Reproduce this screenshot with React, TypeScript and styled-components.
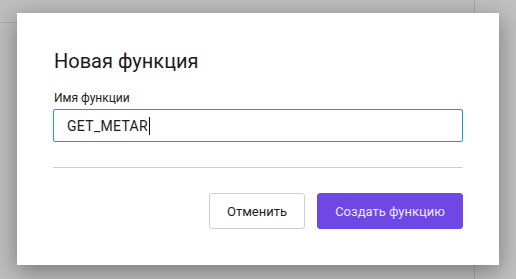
import React from "react";
import styled, { createGlobalStyle } from "styled-components";

const Global = createGlobalStyle`
  html, body { margin: 0; padding: 0; }
  body { font-family: Roboto, "Noto Sans", "Liberation Sans", sans-serif; background: #bebebe; }
  * { box-sizing: border-box; }
`;

const Page = styled.div`
  position: relative;
  width: 516px;
  height: 279px;
  overflow: hidden;
  display: grid;
  grid-template-columns: 475px 1fr;
  background: #bebebe;
`;

const LeftPane = styled.div`
  border-right: 1px solid #a9a9a9;
  display: flex;
  flex-direction: column;
`;

const PaneHeader = styled.div`
  height: 23px;
  border-bottom: 1px solid #ababab;
`;

const RightPane = styled.div`
  background: #c0c0c0;
`;

const Dialog = styled.div`
  position: absolute;
  left: 17px;
  top: 13px;
  width: 482px;
  height: 252px;
  background: #ffffff;
  box-shadow: 0 6px 22px rgba(0, 0, 0, 0.38);
  padding: 36px 36px 36px 36px;
  display: flex;
  flex-direction: column;
`;

const Title = styled.h2`
  margin: 0 0 0 1px;
  font-size: 20px;
  line-height: 24px;
  font-weight: 400;
  color: #1b1b1b;
`;

const Label = styled.label`
  margin-top: 17px;
  font-size: 12px;
  line-height: 16px;
  color: #222;
  display: block;
  margin-left: 1px;
`;

const InputBox = styled.div`
  margin-top: 3px;
  height: 36px;
  border: 1px solid #1a9bd7;
  border-radius: 2px;
  display: flex;
  align-items: center;
  padding-left: 13px;
  font-size: 14px;
  letter-spacing: 0.3px;
  color: #1c1c1c;
`;

const Caret = styled.span`
  display: inline-block;
  width: 1px;
  height: 18px;
  background: #111;
  margin-left: 1px;
`;

const Divider = styled.hr`
  margin: 25px 0 0 0;
  border: none;
  border-top: 1px solid #cfcfcf;
  height: 0;
`;

const Actions = styled.div`
  margin-top: 25px;
  display: flex;
  justify-content: flex-end;
  gap: 12px;
`;

const Button = styled.button<{ $primary?: boolean }>`
  height: 36px;
  padding: 0;
  white-space: nowrap;
  font-family: inherit;
  font-size: 13px;
  border-radius: 3px;
  border: 1px solid ${(p) => (p.$primary ? "#6e47e5" : "#d0d0d0")};
  background: ${(p) => (p.$primary ? "#6e47e5" : "#ffffff")};
  color: ${(p) => (p.$primary ? "#ece8fb" : "#1e1e1e")};
  width: ${(p) => (p.$primary ? "146px" : "96px")};
`;

export default function App() {
  return (
    <>
      <Global />
      <Page>
        <LeftPane>
          <PaneHeader />
        </LeftPane>
        <RightPane />
        <Dialog>
          <Title>Новая функция</Title>
          <Label>Имя функции</Label>
          <InputBox>
            GET_METAR
            <Caret />
          </InputBox>
          <Divider />
          <Actions>
            <Button>Отменить</Button>
            <Button $primary>Создать функцию</Button>
          </Actions>
        </Dialog>
      </Page>
    </>
  );
}
